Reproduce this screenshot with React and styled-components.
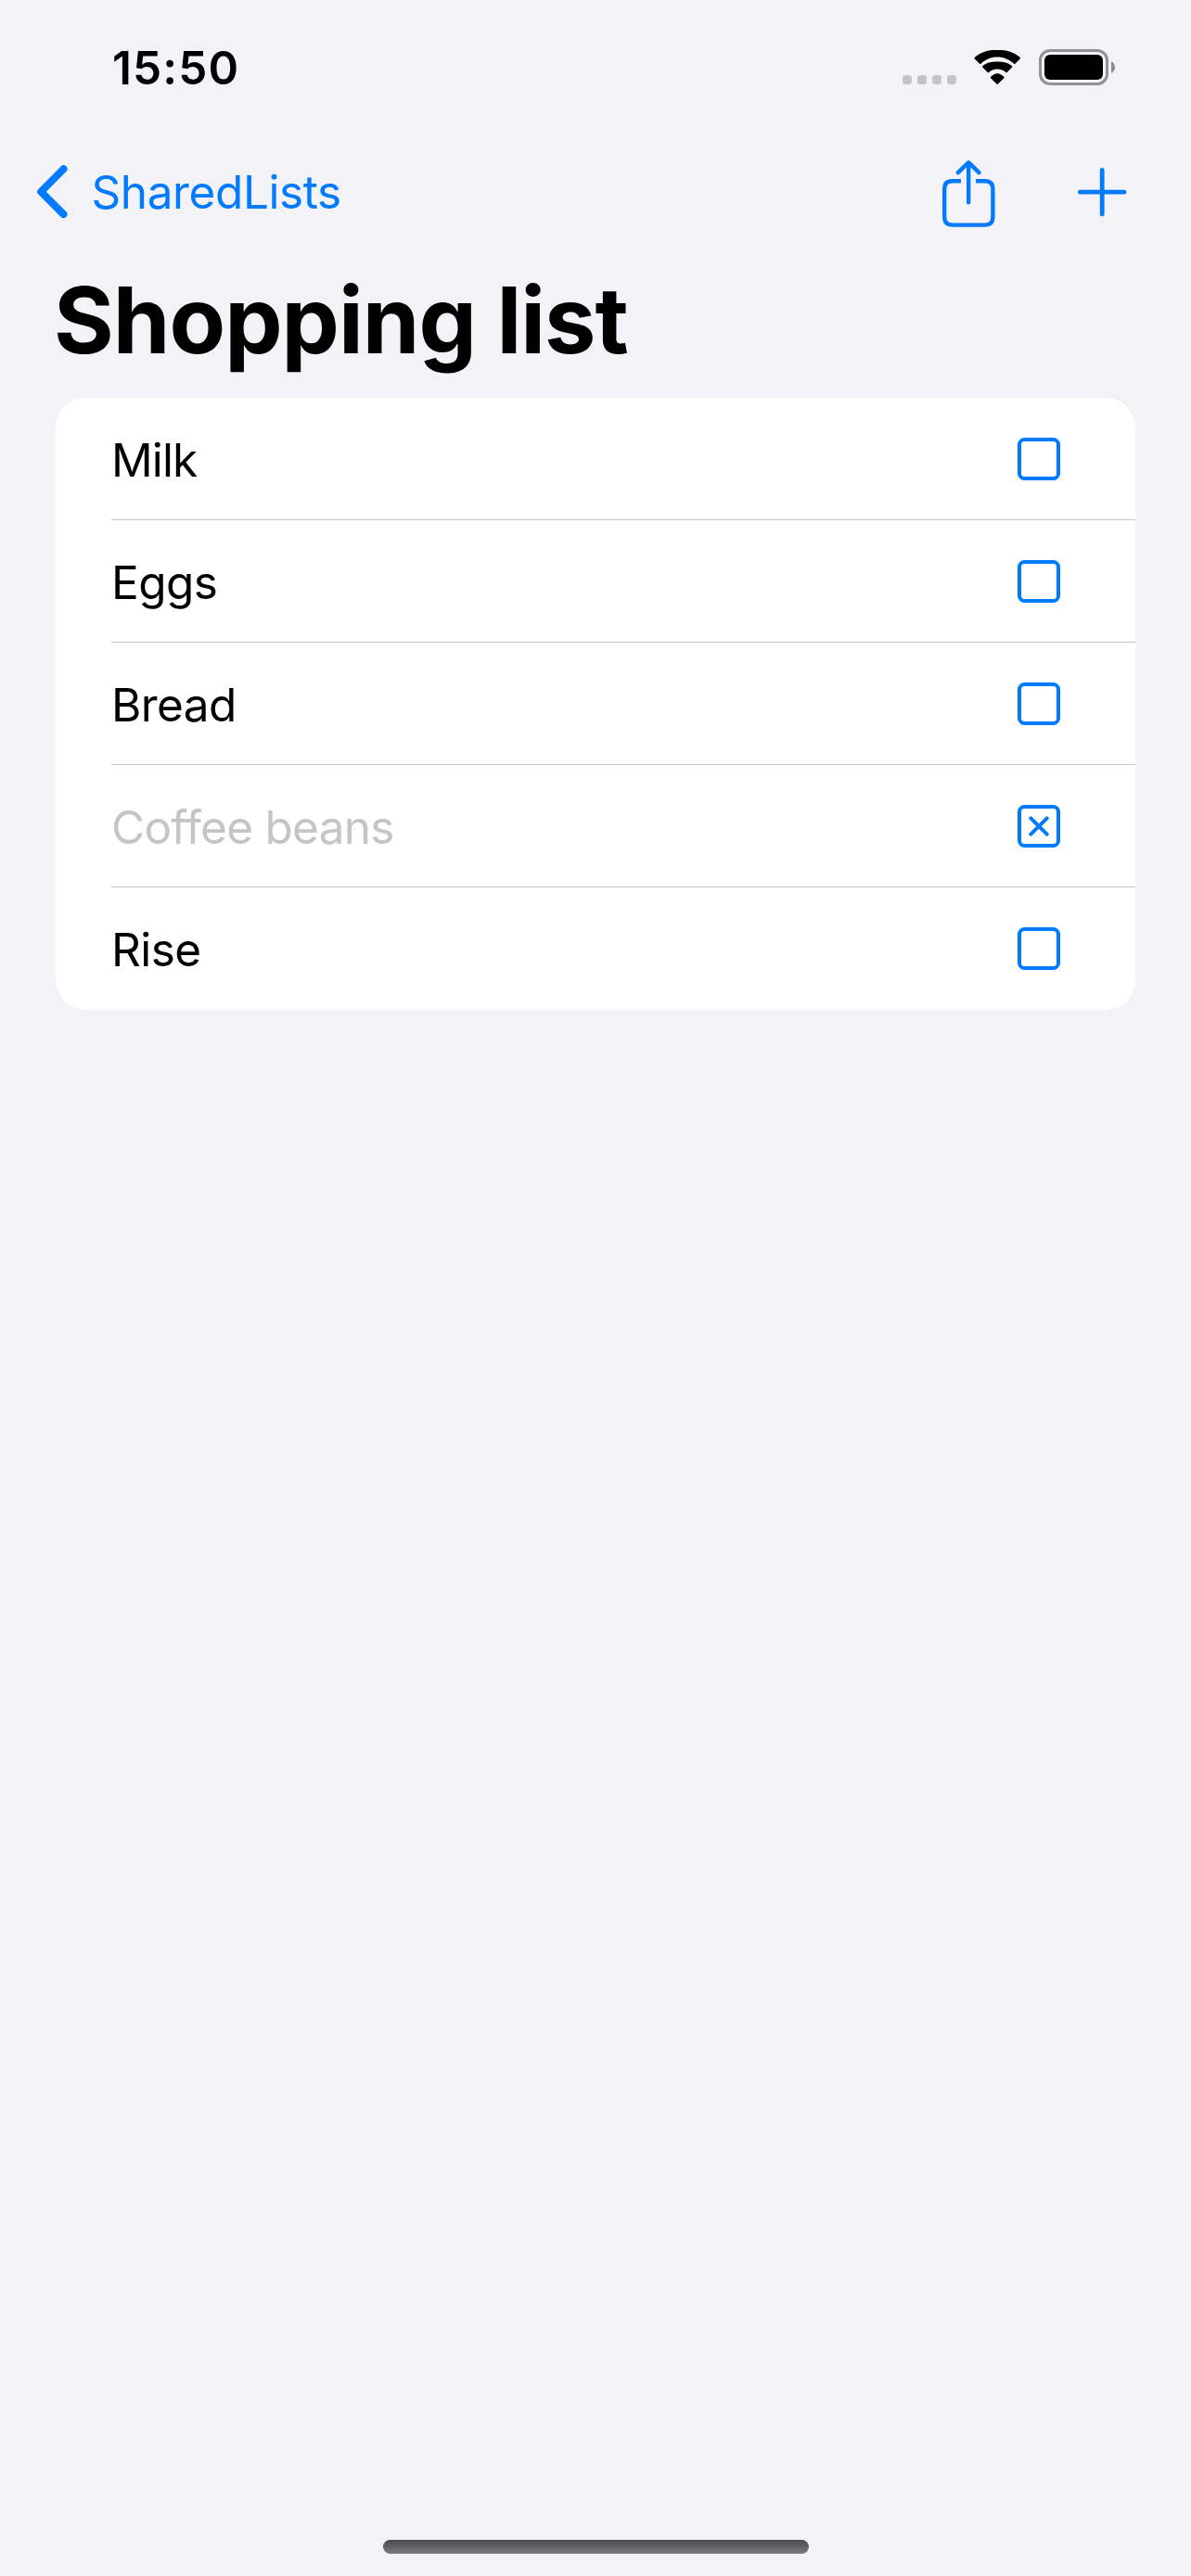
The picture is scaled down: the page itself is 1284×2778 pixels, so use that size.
import React from 'react';
import styled, { createGlobalStyle } from 'styled-components';

const GlobalStyle = createGlobalStyle`
  * { box-sizing: border-box; }
  body {
    margin: 0;
    background: #f2f2f7;
    font-family: Inter, "Liberation Sans", sans-serif;
    -webkit-font-smoothing: antialiased;
  }
`;

const BLUE = '#007aff';

const Screen = styled.div`
  display: flex;
  flex-direction: column;
  width: 1284px;
  height: 2778px;
  background: #f2f2f7;
  color: #000;
`;

const StatusBar = styled.header`
  display: flex;
  justify-content: space-between;
  height: 141px;
  padding: 53px 82px 0 121px;
`;

const Clock = styled.time`
  height: 40px;
  font-size: 49.5px;
  font-weight: 600;
  line-height: 40px;
  letter-spacing: ${(p) => p.$tracking}px;
`;

const StatusIcons = styled.div`
  display: flex;
  align-items: flex-start;
  height: 40px;
`;

const SignalDots = styled.div`
  display: flex;
  gap: 6px;
  margin: 28px 19px 0 0;
`;

const Dot = styled.i`
  width: 10px;
  height: 10px;
  border-radius: 3.5px;
  background: #c4c3c8;
`;

const Icon = styled.svg`
  display: block;
  flex: none;
  fill: none;
  stroke-linecap: round;
  stroke-linejoin: round;
`;

const SolidIcon = styled(Icon)`
  fill: #000;
`;

const WifiSlot = styled.div`
  margin: 1px 19px 0 0;
`;

const NavBar = styled.nav`
  display: flex;
  align-items: center;
  justify-content: space-between;
  height: 132px;
  padding: 0 67px 0 36px;
  color: ${BLUE};
`;

const NavButton = styled.button`
  display: flex;
  align-items: center;
  padding: 0;
  border: 0;
  background: none;
  color: inherit;
  font: inherit;
`;

const BackLabel = styled.span`
  margin-left: 20.5px;
  font-size: 49.5px;
  line-height: 60px;
  letter-spacing: ${(p) => p.$tracking}px;
`;

const NavActions = styled.div`
  display: flex;
  align-items: center;
  gap: 84px;
`;

const Title = styled.h1`
  height: 156px;
  margin: 0;
  padding: 12px 58px 0;
  font-size: 99px;
  font-weight: 700;
  line-height: 120px;
  letter-spacing: ${(p) => p.$tracking}px;
  white-space: nowrap;
`;

const Card = styled.ul`
  margin: 0 60px;
  padding: 0 0 0 60px;
  list-style: none;
  background: #fff;
  border-radius: 32px;
`;

const Row = styled.li`
  display: flex;
  align-items: center;
  justify-content: space-between;
  height: 132px;
  padding-right: 81px;
  border-bottom: 1px solid #c6c6c8;

  &:last-child { border-bottom-color: transparent; }
`;

const ItemName = styled.span`
  padding-top: 3px;
  font-size: 49.5px;
  line-height: 60px;
  letter-spacing: ${(p) => p.$tracking}px;
  color: ${(p) => (p.$done ? '#c5c5c7' : '#000')};
`;

const CheckBox = styled.span`
  display: flex;
  align-items: center;
  justify-content: center;
  width: 46px;
  height: 46px;
  border: 4px solid ${BLUE};
  border-radius: 7.5px;
`;

const HomeArea = styled.footer`
  display: flex;
  justify-content: center;
  margin-top: auto;
  padding: 0 0 24px 1px;
`;

const HomeIndicator = styled.div`
  width: 459px;
  height: 15px;
  border-radius: 8px;
  background: linear-gradient(#4a4a4b, #7b7a7d);
`;

const items = [
  { name: 'Milk', tracking: -0.9 },
  { name: 'Eggs', tracking: -0.6 },
  { name: 'Bread', tracking: -0.6 },
  { name: 'Coffee beans', done: true, tracking: -0.75 },
  { name: 'Rise', tracking: -0.6 },
];

function WifiIcon() {
  return (
    <SolidIcon width="51" height="38" viewBox="0 0 51 38">
      <path d="M25.2 7.6c6.9 0 13.2 2.7 17.9 7.1.4.4.9.4 1.3 0l5.3-5.300c.4-.4.4-1 0-1.300C43.300 2 34.700-.2 25.200-.2S7.200 2 .8 8.100c-.4.300-.4.900 0 1.300l5.300 5.300c.4.400.9.400 1.300 0C12 10.300 18.300 7.600 25.200 7.600z" />
      <path d="M25.2 20.4c3.6 0 6.8 1.3 9.2 3.5.4.4.9.4 1.3 0l5.4-5.300c.4-.4.4-1 0-1.300-4.200-3.900-9.800-4.800-15.900-4.800s-11.700.9-15.900 4.800c-.4.300-.4.900 0 1.300l5.400 5.300c.4.400.9.400 1.300 0 2.400-2.200 5.600-3.500 9.200-3.500z" />
      <path d="M32.4 30.2c.4-.4.4-.9 0-1.300-2-1.700-4.300-3.600-7.200-3.600s-5.200 1.900-7.200 3.600c-.4.400-.4.900 0 1.300l6.500 6.400c.4.400 1 .4 1.400 0z" />
    </SolidIcon>
  );
}

function BatteryIcon() {
  return (
    <Icon width="82" height="39" viewBox="0 0 82 39">
      <rect x="1.5" y="1.5" width="72" height="36" rx="10.5" stroke="#929194" strokeWidth="3" />
      <rect x="6" y="6" width="63" height="27" rx="6" fill="#000" />
      <path d="M78 13.2c2.5 1 4 3.5 4 6.300s-1.500 5.300-4 6.300z" fill="#8c8b8e" />
    </Icon>
  );
}

function BackIcon() {
  return (
    <Icon width="42" height="60" viewBox="0 0 42 60" stroke={BLUE} strokeWidth="8">
      <path d="M32.500 5.200 8.200 29.700 32.500 54.100" />
    </Icon>
  );
}

function ShareIcon() {
  return (
    <Icon width="61" height="80" viewBox="0 -4 61 80" stroke={BLUE} strokeWidth="4.4">
      <path
        d="M22 24.200H12.500Q4.200 24.200 4.200 32.500V63.300Q4.200 71.600 12.500 71.600H48.300Q56.400 71.600 56.400 63.300V32.500Q56.400 24.200 48.300 24.200H38"
        strokeLinecap="butt"
      />
      <path d="M30.200 47.200V4.800M18.800 15.200 30.200 4.200 41.500 15.200" />
    </Icon>
  );
}

function PlusIcon() {
  return (
    <Icon width="58" height="58" viewBox="0 0 58 58" stroke={BLUE} strokeWidth="4.8">
      <path d="M29.200 5.400V53M5.400 29.200H53" />
    </Icon>
  );
}

function CrossIcon() {
  return (
    <Icon width="22" height="22" viewBox="0 0 22 22" stroke={BLUE} strokeWidth="4">
      <path d="M2.300 2.300 19.700 19.700M19.700 2.300 2.300 19.700" />
    </Icon>
  );
}

export default function App() {
  return (
    <Screen>
      <GlobalStyle />
      <StatusBar>
        <Clock $tracking={1.1}>15:50</Clock>
        <StatusIcons>
          <SignalDots>
            <Dot />
            <Dot />
            <Dot />
            <Dot />
          </SignalDots>
          <WifiSlot>
            <WifiIcon />
          </WifiSlot>
          <BatteryIcon />
        </StatusIcons>
      </StatusBar>
      <NavBar>
        <NavButton>
          <BackIcon />
          <BackLabel $tracking={-0.4}>SharedLists</BackLabel>
        </NavButton>
        <NavActions>
          <NavButton>
            <ShareIcon />
          </NavButton>
          <NavButton>
            <PlusIcon />
          </NavButton>
        </NavActions>
      </NavBar>
      <Title $tracking={-1}>Shopping list</Title>
      <Card>
        {items.map(({ name, done, tracking }) => (
          <Row key={name}>
            <ItemName $done={done} $tracking={tracking}>{name}</ItemName>
            <CheckBox>{done && <CrossIcon />}</CheckBox>
          </Row>
        ))}
      </Card>
      <HomeArea>
        <HomeIndicator />
      </HomeArea>
    </Screen>
  );
}
